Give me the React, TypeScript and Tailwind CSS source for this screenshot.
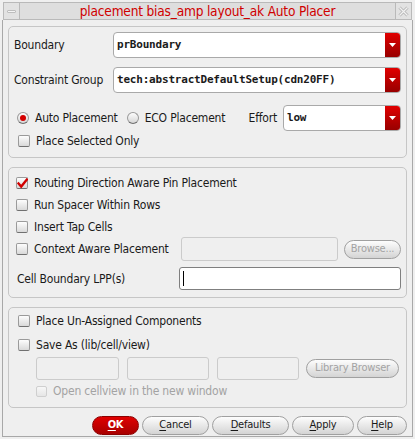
import React from "react";

const SANS = "font-[family-name:'DejaVu_Sans_Condensed','DejaVu_Sans',sans-serif]";
const MONO = "font-[family-name:'DejaVu_Sans_Mono',monospace]";

function Check({ checked = false, disabled = false }: { checked?: boolean; disabled?: boolean }) {
  return (
    <span
      className={
        disabled
          ? "relative block w-[11px] h-[11px] shrink-0 rounded-[2px] border border-[#cfcfcf] bg-linear-to-b from-[#f7f7f7] to-[#e6e6e6]"
          : "relative block w-[12px] h-[12px] shrink-0 rounded-[2px] border border-[#9a9a9a] border-b-[#707070] bg-linear-to-b from-[#fdfdfd] to-[#d9d9d9]"
      }
    >
      {checked && (
        <svg className="absolute left-[0px] top-[0px]" width="11" height="11" viewBox="0 0 11 11">
          <path d="M1.5 5.5 L4.2 8.6 L9.8 1.6" stroke="#d10000" strokeWidth="2.4" fill="none" strokeLinecap="square" />
        </svg>
      )}
    </span>
  );
}

function Radio({ on = false }: { on?: boolean }) {
  return (
    <span className="relative w-[12px] h-[12px] shrink-0 rounded-full border border-[#9a9a9a] border-b-[#6f6f6f] bg-linear-to-b from-[#fdfdfd] to-[#d6d6d6] flex items-center justify-center">
      {on && <span className="w-[6px] h-[6px] rounded-full bg-[#d40000]" />}
    </span>
  );
}

function Dropdown({ text, w }: { text: string; w: string }) {
  return (
    <div className={`${w} h-[26px] flex rounded-[4px] border border-[#a9a9a9] bg-white overflow-hidden`}>
      <div className={`flex-1 flex items-center pl-[3px] text-[11px] font-bold text-[#1a1a1a] ${MONO}`}>{text}</div>
      <div className="w-[15px] bg-linear-to-b from-[#e10000] to-[#980000] flex items-center justify-center">
        <svg width="7" height="4" viewBox="0 0 7 4">
          <path d="M0 0 H7 L3.5 4 Z" fill="white" />
        </svg>
      </div>
    </div>
  );
}

function PillButton({ label, u, w, disabled = false }: { label: string; u?: number; w: string; disabled?: boolean }) {
  return (
    <div
      className={`${w} h-[19px] rounded-full border border-[#a0a0a0] bg-linear-to-b from-[#fdfdfd] to-[#d4d4d4] flex items-center justify-center text-[11px] ${
        disabled ? "text-[#a3a3a3]" : "text-[#1a1a1a]"
      }`}
    >
      {u === undefined ? (
        <span>{label}</span>
      ) : (
        <span>
          {label.slice(0, u)}
          <span className="underline underline-offset-2">{label.charAt(u)}</span>
          {label.slice(u + 1)}
        </span>
      )}
    </div>
  );
}

export default function App() {
  return (
    <div className={`w-[415px] h-[439px] bg-[#efefef] flex flex-col overflow-hidden tracking-[-0.2px] text-[#1a1a1a] ${SANS}`}>
      {/* title bar */}
      <div className="flex h-[20px] pt-[2px] px-[3px]">
        <div className="w-[17px] h-[18px] border border-[#b9b9b9] bg-[#e2e2e2] flex items-center justify-center">
          <span className="w-[9px] h-[3px] border border-[#bdbdbd] bg-[#f4f4f4] rounded-[1px]" />
        </div>
        <div className="flex-1 h-[18px] border-y border-[#b9b9b9] bg-[#dedede] flex items-center justify-center text-[13.6px] text-[#d00000]">
          placement bias_amp layout_ak Auto Placer
        </div>
        <div className="w-[17px] h-[18px] border border-[#b9b9b9] bg-[#e2e2e2] flex items-center justify-center">
          <svg width="11" height="11" viewBox="0 0 11 11">
            <path d="M1.5 1.5 L9.5 9.5 M9.5 1.5 L1.5 9.5" stroke="#b5b5b5" strokeWidth="3" />
            <path d="M1.5 1.5 L9.5 9.5 M9.5 1.5 L1.5 9.5" stroke="#f2f2f2" strokeWidth="1.2" />
          </svg>
        </div>
      </div>

      {/* body */}
      <div className="flex-1 mx-[2px] mb-[2px] border-x border-b border-[#a8a8a8] px-[5px] flex flex-col">
        {/* panel 1 */}
        <div className="mt-[6px] h-[132px] rounded-[5px] border border-[#c6c6c6] pl-[5px] pr-[5px] pt-[5px] flex flex-col">
          <div className="flex items-center h-[26px]">
            <span className="w-[99px] text-[12px]">Boundary</span>
            <Dropdown text="prBoundary" w="w-[288px]" />
          </div>
          <div className="flex items-center h-[26px] mt-[9px]">
            <span className="w-[99px] text-[12px]">Constraint Group</span>
            <Dropdown text="tech:abstractDefaultSetup(cdn20FF)" w="w-[288px]" />
          </div>
          <div className="flex items-center h-[26px] mt-[12px] text-[12px]">
            <span className="ml-[3px] flex"><Radio on /></span>
            <span className="ml-[6px]">Auto Placement</span>
            <span className="ml-[9px] flex"><Radio /></span>
            <span className="ml-[6px]">ECO Placement</span>
            <span className="ml-auto mr-[6px]">Effort</span>
            <Dropdown text="low" w="w-[118px]" />
          </div>
          <div className="flex items-center h-[12px] mt-[4px] text-[12px]">
            <span className="ml-[4px] flex"><Check /></span>
            <span className="ml-[6px]">Place Selected Only</span>
          </div>
        </div>

        {/* panel 2 */}
        <div className="mt-[9px] h-[131px] rounded-[5px] border border-[#c6c6c6] pl-[7px] pr-[5px] pt-[4px] flex flex-col text-[12px]">
          <div className="flex items-center h-[22px]">
            <Check checked />
            <span className="ml-[6px]">Routing Direction Aware Pin Placement</span>
          </div>
          <div className="flex items-center h-[22px]">
            <Check />
            <span className="ml-[6px]">Run Spacer Within Rows</span>
          </div>
          <div className="flex items-center h-[22px]">
            <Check />
            <span className="ml-[6px]">Insert Tap Cells</span>
          </div>
          <div className="flex items-center h-[22px]">
            <Check />
            <span className="ml-[6px]">Context Aware Placement</span>
            <div className="ml-auto w-[157px] h-[24px] rounded-[3px] border border-[#cbcbcb] bg-[#efefef]" />
            <div className="ml-[6px]">
              <PillButton label="Browse..." w="w-[57px]" disabled />
            </div>
          </div>
          <div className="flex items-center h-[23px] mt-[7px]">
            <span className="ml-[1px]">Cell Boundary LPP(s)</span>
            <div className="ml-auto w-[222px] h-[23px] rounded-[3px] border border-[#7f7f7f] bg-white flex items-center pl-[3px]">
              <span className="w-[1px] h-[15px] bg-black" />
            </div>
          </div>
        </div>

        {/* panel 3 */}
        <div className="mt-[9px] h-[101px] rounded-[5px] border border-[#c6c6c6] pl-[9px] pr-[5px] pt-[2px] flex flex-col text-[12px]">
          <div className="flex items-center h-[22px]">
            <Check />
            <span className="ml-[6px]">Place Un-Assigned Components</span>
          </div>
          <div className="flex items-center h-[22px] mt-[2px]">
            <Check />
            <span className="ml-[6px]">Save As (lib/cell/view)</span>
          </div>
          <div className="flex items-center h-[23px] mt-[1px] pl-[18px] gap-[8px]">
            <div className="w-[83px] h-[23px] rounded-[3px] border border-[#cbcbcb] bg-[#efefef]" />
            <div className="w-[82px] h-[23px] rounded-[3px] border border-[#cbcbcb] bg-[#efefef]" />
            <div className="w-[82px] h-[23px] rounded-[3px] border border-[#cbcbcb] bg-[#efefef]" />
            <div className="ml-[-1px]">
              <PillButton label="Library Browser" w="w-[93px]" disabled />
            </div>
          </div>
          <div className="flex items-center h-[16px] mt-[3px] pl-[18px]">
            <Check disabled />
            <span className="ml-[6px] text-[#a3a3a3]">Open cellview in the new window</span>
          </div>
        </div>

        {/* buttons */}
        <div className="mt-[8px] flex justify-end gap-[3px]">
          <div className="w-[47px] h-[19px] rounded-full border border-[#8c0000] bg-linear-to-b from-[#e00000] to-[#a80000] flex items-center justify-center text-[11px] font-bold text-white">
            <span>
              <span className="underline underline-offset-2">O</span>K
            </span>
          </div>
          <PillButton label="Cancel" u={0} w="w-[67px]" />
          <PillButton label="Defaults" u={0} w="w-[77px]" />
          <PillButton label="Apply" u={0} w="w-[62px]" />
          <PillButton label="Help" u={0} w="w-[50px]" />
        </div>
      </div>
    </div>
  );
}
